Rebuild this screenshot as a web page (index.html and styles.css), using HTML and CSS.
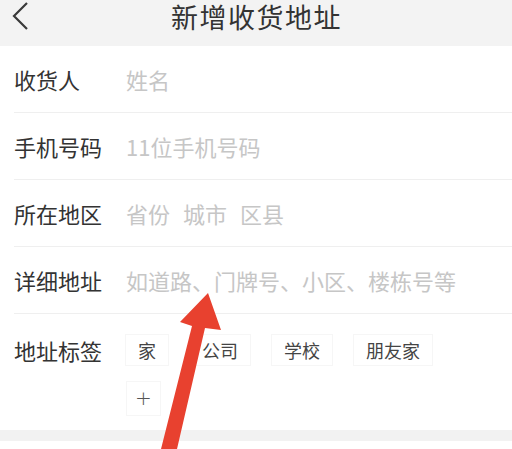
FILE: index.html
```html
<!DOCTYPE html>
<html lang="zh-CN">
<head>
<meta charset="utf-8">
<title>新增收货地址</title>
<link rel="stylesheet" href="styles.css">
</head>
<body>
<div class="page">
  <header class="header">
    <span class="back">
      <svg width="20" height="30" viewBox="0 0 20 30"><polyline points="15,2 2,15 15,28" fill="none" stroke="#3a3a3a" stroke-width="2.2" stroke-linejoin="miter"/></svg>
    </span>
    <h1 class="title">新增收货地址</h1>
    <span></span>
  </header>
  <main class="form">
    <div class="row">
      <span class="label">收货人</span>
      <span class="ph">姓名</span>
    </div>
    <div class="row">
      <span class="label">手机号码</span>
      <span class="ph">11位手机号码</span>
    </div>
    <div class="row">
      <span class="label">所在地区</span>
      <span class="ph region"><span>省份</span><span>城市</span><span>区县</span></span>
    </div>
    <div class="row">
      <span class="label">详细地址</span>
      <span class="ph">如道路、门牌号、小区、楼栋号等</span>
    </div>
    <div class="row row-tags">
      <span class="label">地址标签</span>
      <div class="tag-area">
        <div class="tags">
          <span class="tag">家</span>
          <span class="tag">公司</span>
          <span class="tag">学校</span>
          <span class="tag">朋友家</span>
        </div>
        <span class="tag add">+</span>
      </div>
    </div>
  </main>
  <div class="band"></div>
  <svg class="arrow" width="512" height="449" viewBox="0 0 512 449">
    <polygon points="161,449 177,449 205,328 221,330 208,293 180,322 192,326" fill="#e8412f"/>
  </svg>
</div>
</body>
</html>
```

FILE: styles.css
```css
* { box-sizing: border-box; margin: 0; padding: 0; }
html, body { background: #fff; }
body {
  font-family: "Noto Sans CJK SC", "Noto Sans", sans-serif;
  color: #333;
  width: 512px;
  height: 449px;
  overflow: hidden;
}
.page { position: relative; width: 512px; height: 449px; }
.header {
  height: 46px;
  background: #f3f3f3;
  display: grid;
  grid-template-columns: 48px 1fr 48px;
  align-items: start;
  padding-top: 2px;
}
.back { display: block; padding: 0 0 0 12px; height: 32px; }
.back svg { display: block; margin-top: -1px; }
.title {
  text-align: center;
  font-size: 27px;
  font-weight: 400;
  letter-spacing: 1.5px;
  line-height: 30px;
  color: #333;
  padding-left: 1px;
}
.form { background: #fff; }
.row {
  margin-left: 14px;
  height: 67px;
  border-bottom: 1px solid #efefef;
  display: flex;
  align-items: center;
}
.label {
  width: 112px;
  flex: none;
  font-size: 22px;
  line-height: 26px;
  color: #333;
}
.ph {
  font-size: 22px;
  line-height: 26px;
  color: #c6c6c6;
}
.region { display: flex; gap: 13px; }
.row-tags {
  height: 116px;
  border-bottom: none;
  align-items: flex-start;
  padding-top: 20px;
}
.row-tags .label { padding-top: 3px; }
.tag-area { display: flex; flex-direction: column; gap: 15px; align-items: flex-start; }
.tags { display: flex; gap: 20px; margin-left: -1px; }
.tag {
  height: 32px;
  padding: 0 12px;
  border: 1px solid #f6f6f6;
  font-size: 18px;
  line-height: 30px;
  color: #444;
  display: inline-block;
}
.tag.add {
  width: 35px;
  height: 35px;
  padding: 0;
  text-align: center;
  line-height: 32px;
  font-size: 20px;
  color: #555;
  font-family: "DejaVu Sans", sans-serif;
  font-weight: 300;
}
.band { height: 11px; background: #f2f2f2; }
.arrow { position: absolute; left: 0; top: 0; pointer-events: none; }
```
